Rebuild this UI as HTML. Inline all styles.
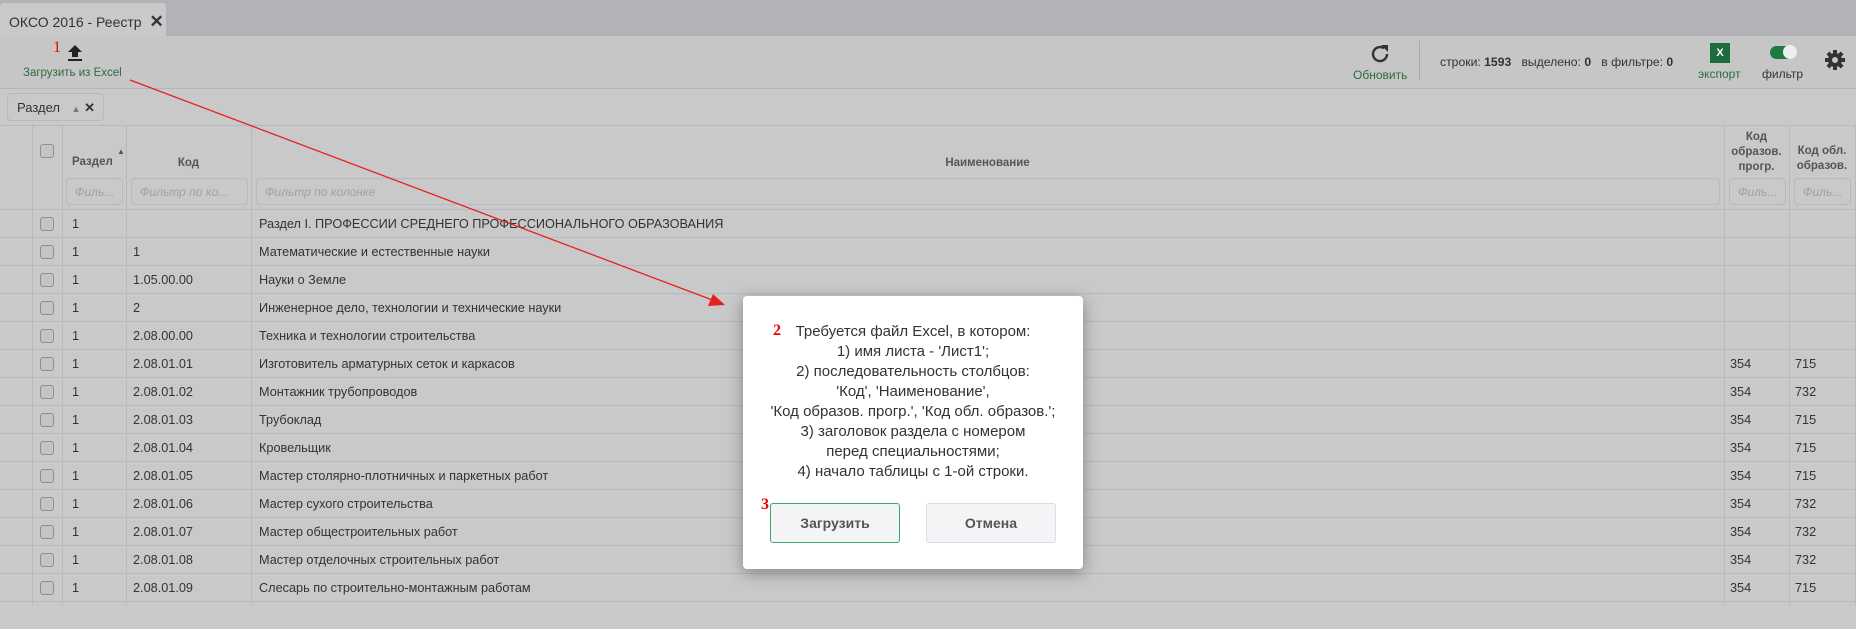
<!DOCTYPE html>
<html><head><meta charset="utf-8"><style>
*{box-sizing:border-box;margin:0;padding:0}
body{width:1856px;height:605px;overflow:hidden;background:#c9c9c9;font-family:"Liberation Sans",sans-serif;color:#333;position:relative;font-size:13px}
.a{position:absolute}
.tabbar{left:0;top:0;width:1856px;height:36px;background:#b1b3b6}
.tab{left:0;top:3px;width:166px;height:33px;background:#c9c9c9;border-radius:4px 4px 0 0;font-size:14px;padding:9px 0 0 9px;color:#333;white-space:nowrap}
.toolbar{left:0;top:36px;width:1856px;height:53px;background:#c6c6c6;border-bottom:1px solid #b3b5bb}
.g{color:#2b6b40;font-size:11.5px;white-space:nowrap}
.chip{left:7px;top:93px;width:97px;height:28px;border:1px solid #b8b8c0;border-radius:4px;font-size:13px;padding:6px 0 0 9px;white-space:nowrap}
.line{height:1px;background:#b8b8c4}
.vl{width:1px;background:#b8b8c4;top:126px;height:479px}
.fi{height:27px;border:1px solid #b8b8c4;border-radius:4px;top:178px;font-style:italic;color:#a0a0a8;font-size:12px;padding:6px 0 0 8px;white-space:nowrap;overflow:hidden}
.row{left:0;width:1856px;height:28px;border-top:1px solid #b8b8c4}
.cb{width:14px;height:14px;border:1px solid #8f8f95;border-radius:3px;background:#c4c4c4}
.t{top:7px;font-size:12.7px;white-space:nowrap}
.h{font-size:11.5px;font-weight:bold;color:#555;text-align:center}
.modal{left:743px;top:296px;width:340px;height:273px;background:#fff;border-radius:4px;box-shadow:0 4px 16px rgba(0,0,0,.35)}
.mt{top:26px;left:0;width:340px;text-align:center;font-size:15px;line-height:20px;color:#333}
.btn{top:207px;width:130px;height:40px;border-radius:3px;background:#f4f4f6;font-size:14px;font-weight:bold;color:#555;text-align:center;line-height:38px}
.red{color:#e00;font-family:"Liberation Serif",serif;font-size:16px}
</style></head><body>
<div class="a tabbar"></div>
<div class="a tab">ОКСО 2016 - Реестр <span style="font-size:17px;font-weight:bold;margin-left:4px">✕</span></div>
<div class="a toolbar"></div>
<svg class="a" style="left:66px;top:44px" width="18" height="18" viewBox="0 0 18 18"><path d="M9 1 L16 8 H12 V13 H6 V8 H2 Z" fill="#222"/><rect x="2" y="15" width="14" height="2" fill="#222"/></svg>
<div class="a g" style="left:23px;top:67px">Загрузить из Excel</div>
<div class="a red" style="left:53px;top:39px">1</div>
<svg class="a" style="left:1368px;top:42px" width="24" height="24" viewBox="0 0 24 24"><path d="M19 12 A7 7 0 1 1 16 6.3" fill="none" stroke="#333" stroke-width="2.4"/><path d="M13 3 L20 3 L20 10 Z" fill="#333"/></svg>
<div class="a g" style="left:1353px;top:68px;font-size:12px">Обновить</div>
<div class="a" style="left:1419px;top:41px;width:1px;height:39px;background:#a8a8a8"></div>
<div class="a" style="left:1440px;top:55px;font-size:12.2px;white-space:nowrap">строки: <b>1593</b>&nbsp;&nbsp;&nbsp;выделено: <b>0</b>&nbsp;&nbsp;&nbsp;в фильтре: <b>0</b></div>
<div class="a" style="left:1710px;top:43px;width:20px;height:20px;background:#1e6b3c;color:#fff;font-size:11px;text-align:center;line-height:20px;font-weight:bold">X</div>
<div class="a g" style="left:1698px;top:67px;font-size:12px">экспорт</div>
<div class="a" style="left:1770px;top:46px;width:25px;height:13px;border-radius:7px;background:#1e7a40"></div>
<div class="a" style="left:1783px;top:45px;width:14px;height:14px;border-radius:7px;background:#eee"></div>
<div class="a" style="left:1762px;top:67px;font-size:12px">фильтр</div>
<svg class="a" style="left:1825px;top:50px" width="20" height="20" viewBox="0 0 20 20"><g fill="#333"><circle cx="10" cy="10" r="7"/><rect x="8" y="0" width="4" height="20"/><rect x="0" y="8" width="20" height="4"/><rect x="8" y="0" width="4" height="20" transform="rotate(45 10 10)"/><rect x="8" y="0" width="4" height="20" transform="rotate(-45 10 10)"/></g><circle cx="10" cy="10" r="3" fill="#c6c6c6"/></svg>

<div class="a chip">Раздел <span style="color:#777;font-size:9px;margin-left:8px">▲</span> <b style="font-size:13px">✕</b></div>
<div class="a line" style="left:0;top:125px;width:1856px"></div>
<div class="a vl" style="left:32px"></div><div class="a vl" style="left:62px"></div><div class="a vl" style="left:126px"></div><div class="a vl" style="left:251px"></div><div class="a vl" style="left:1724px"></div><div class="a vl" style="left:1789px"></div><div class="a vl" style="left:1855px"></div>
<div class="a cb" style="left:40px;top:144px"></div>
<div class="a h" style="left:72px;top:156px">Раздел</div><div class="a" style="left:117px;top:147px;font-size:8px;color:#555">▲</div>
<div class="a h" style="left:126px;top:157px;width:125px">Код</div>
<div class="a h" style="left:251px;top:157px;width:1473px">Наименование</div>
<div class="a h" style="left:1724px;top:130px;width:65px;line-height:15px">Код<br>образов.<br>прогр.</div>
<div class="a h" style="left:1789px;top:144px;width:66px;line-height:15px">Код обл.<br>образов.</div>
<div class="a fi" style="left:66px;width:57px">Филь...</div>
<div class="a fi" style="left:131px;width:117px">Фильтр по ко...</div>
<div class="a fi" style="left:256px;width:1464px">Фильтр по колонке</div>
<div class="a fi" style="left:1729px;width:57px">Филь...</div>
<div class="a fi" style="left:1794px;width:57px">Филь...</div>

<div class="a row" style="top:209px"><div class="a cb" style="left:40px;top:7px"></div><div class="a t" style="left:72px">1</div><div class="a t" style="left:259px">Раздел I. ПРОФЕССИИ СРЕДНЕГО ПРОФЕССИОНАЛЬНОГО ОБРАЗОВАНИЯ</div></div>
<div class="a row" style="top:237px"><div class="a cb" style="left:40px;top:7px"></div><div class="a t" style="left:72px">1</div><div class="a t" style="left:133px">1</div><div class="a t" style="left:259px">Математические и естественные науки</div></div>
<div class="a row" style="top:265px"><div class="a cb" style="left:40px;top:7px"></div><div class="a t" style="left:72px">1</div><div class="a t" style="left:133px">1.05.00.00</div><div class="a t" style="left:259px">Науки о Земле</div></div>
<div class="a row" style="top:293px"><div class="a cb" style="left:40px;top:7px"></div><div class="a t" style="left:72px">1</div><div class="a t" style="left:133px">2</div><div class="a t" style="left:259px">Инженерное дело, технологии и технические науки</div></div>
<div class="a row" style="top:321px"><div class="a cb" style="left:40px;top:7px"></div><div class="a t" style="left:72px">1</div><div class="a t" style="left:133px">2.08.00.00</div><div class="a t" style="left:259px">Техника и технологии строительства</div></div>
<div class="a row" style="top:349px"><div class="a cb" style="left:40px;top:7px"></div><div class="a t" style="left:72px">1</div><div class="a t" style="left:133px">2.08.01.01</div><div class="a t" style="left:259px">Изготовитель арматурных сеток и каркасов</div><div class="a t" style="left:1730px">354</div><div class="a t" style="left:1795px">715</div></div>
<div class="a row" style="top:377px"><div class="a cb" style="left:40px;top:7px"></div><div class="a t" style="left:72px">1</div><div class="a t" style="left:133px">2.08.01.02</div><div class="a t" style="left:259px">Монтажник трубопроводов</div><div class="a t" style="left:1730px">354</div><div class="a t" style="left:1795px">732</div></div>
<div class="a row" style="top:405px"><div class="a cb" style="left:40px;top:7px"></div><div class="a t" style="left:72px">1</div><div class="a t" style="left:133px">2.08.01.03</div><div class="a t" style="left:259px">Трубоклад</div><div class="a t" style="left:1730px">354</div><div class="a t" style="left:1795px">715</div></div>
<div class="a row" style="top:433px"><div class="a cb" style="left:40px;top:7px"></div><div class="a t" style="left:72px">1</div><div class="a t" style="left:133px">2.08.01.04</div><div class="a t" style="left:259px">Кровельщик</div><div class="a t" style="left:1730px">354</div><div class="a t" style="left:1795px">715</div></div>
<div class="a row" style="top:461px"><div class="a cb" style="left:40px;top:7px"></div><div class="a t" style="left:72px">1</div><div class="a t" style="left:133px">2.08.01.05</div><div class="a t" style="left:259px">Мастер столярно-плотничных и паркетных работ</div><div class="a t" style="left:1730px">354</div><div class="a t" style="left:1795px">715</div></div>
<div class="a row" style="top:489px"><div class="a cb" style="left:40px;top:7px"></div><div class="a t" style="left:72px">1</div><div class="a t" style="left:133px">2.08.01.06</div><div class="a t" style="left:259px">Мастер сухого строительства</div><div class="a t" style="left:1730px">354</div><div class="a t" style="left:1795px">732</div></div>
<div class="a row" style="top:517px"><div class="a cb" style="left:40px;top:7px"></div><div class="a t" style="left:72px">1</div><div class="a t" style="left:133px">2.08.01.07</div><div class="a t" style="left:259px">Мастер общестроительных работ</div><div class="a t" style="left:1730px">354</div><div class="a t" style="left:1795px">732</div></div>
<div class="a row" style="top:545px"><div class="a cb" style="left:40px;top:7px"></div><div class="a t" style="left:72px">1</div><div class="a t" style="left:133px">2.08.01.08</div><div class="a t" style="left:259px">Мастер отделочных строительных работ</div><div class="a t" style="left:1730px">354</div><div class="a t" style="left:1795px">732</div></div>
<div class="a row" style="top:573px"><div class="a cb" style="left:40px;top:7px"></div><div class="a t" style="left:72px">1</div><div class="a t" style="left:133px">2.08.01.09</div><div class="a t" style="left:259px">Слесарь по строительно-монтажным работам</div><div class="a t" style="left:1730px">354</div><div class="a t" style="left:1795px">715</div></div>
<div class="a row" style="top:601px"></div>

<svg class="a" style="left:0;top:0" width="1856" height="605"><line x1="130" y1="80" x2="715" y2="301" stroke="#e82020" stroke-width="1.3"/><path d="M725 305 L708 306 L713 294 Z" fill="#e82020"/></svg>

<div class="a modal">
<div class="a mt">Требуется файл Excel, в котором:<br>1) имя листа - 'Лист1';<br>2) последовательность столбцов:<br>'Код', 'Наименование',<br>'Код образов. прогр.', 'Код обл. образов.';<br>3) заголовок раздела с номером<br>перед специальностями;<br>4) начало таблицы с 1-ой строки.</div>
<div class="a btn" style="left:27px;border:1px solid #3aaa6a">Загрузить</div>
<div class="a btn" style="left:183px;border:1px solid #dcdce6">Отмена</div>
<div class="a red" style="left:30px;top:26px;font-weight:bold">2</div>
<div class="a red" style="left:18px;top:200px;font-weight:bold">3</div>
</div>
</body></html>
